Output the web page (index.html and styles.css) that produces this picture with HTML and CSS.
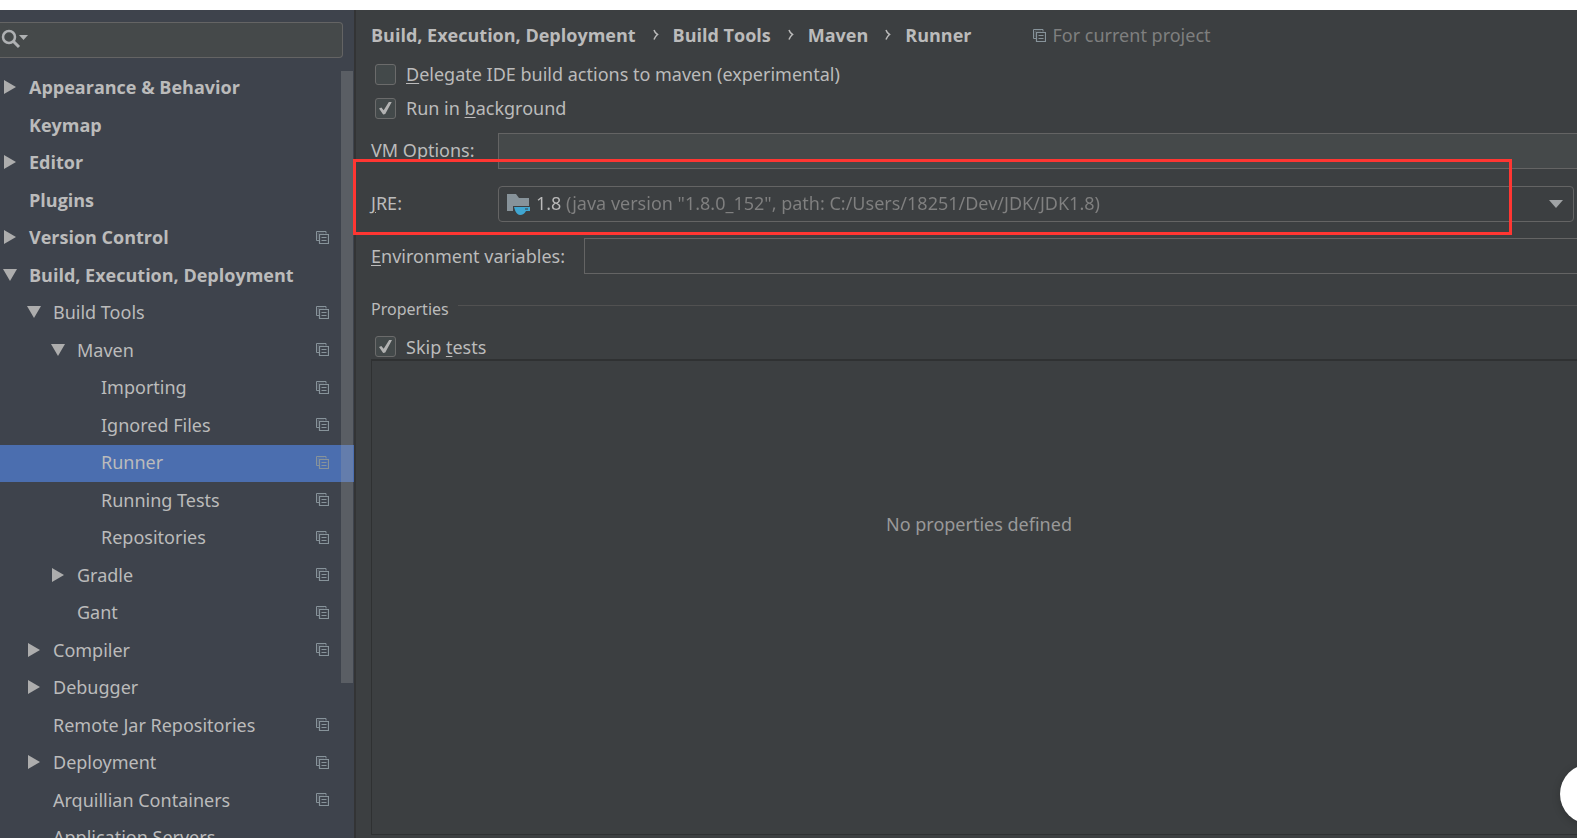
FILE: index.html
```html
<!DOCTYPE html>
<html lang="en">
<head>
<meta charset="utf-8">
<title>Settings</title>
<link rel="stylesheet" href="styles.css">
</head>
<body>
<svg class="sprite" aria-hidden="true">
  <symbol id="project" viewBox="0 0 13 13">
    <path d="M3 9.500H.5V.5h9.500v2" fill="none" stroke="currentColor"/>
    <path d="M2 8V2h6" fill="none" stroke="currentColor" stroke-opacity=".35"/>
    <path d="M3.500 3.500h9v9h-9z" fill="none" stroke="currentColor" stroke-width="1.200"/>
    <path d="M5.500 6.500h5M5.500 9.500h5" fill="none" stroke="currentColor" stroke-width="1.200"/>
  </symbol>
  <symbol id="closed" viewBox="0 0 14 14"><path d="M1 0l12 7-12 7z" fill="currentColor"/></symbol>
  <symbol id="open" viewBox="0 0 14 14"><path d="M0 1h14L7 13z" fill="currentColor"/></symbol>
  <symbol id="sep" viewBox="0 0 6 12"><path d="M1 1q1 3 3.500 4.500Q2 7.500 1 10.500" fill="none" stroke="currentColor" stroke-width="1.500"/></symbol>
</svg>
<div class="window">
  <aside class="sidebar">
    <div class="search">
      <svg class="search-icon" viewBox="0 0 28 20" aria-hidden="true"><circle cx="9" cy="8" r="6" fill="none" stroke="currentColor" stroke-width="2.500"/><path d="M13 12l6 6" stroke="currentColor" stroke-width="3"/><path d="M19 6h9l-4.500 5z" fill="currentColor"/></svg>
      <input class="search-input" type="text" aria-label="Search settings">
    </div>
    <nav class="tree" aria-label="Settings">
      <a class="row top" href="#"><svg class="arrow"><use href="#closed"/></svg><span class="name">Appearance &amp; Behavior</span></a>
      <a class="row top" href="#"><span class="arrow"></span><span class="name">Keymap</span></a>
      <a class="row top" href="#"><svg class="arrow"><use href="#closed"/></svg><span class="name">Editor</span></a>
      <a class="row top" href="#"><span class="arrow"></span><span class="name">Plugins</span></a>
      <a class="row top" href="#"><svg class="arrow"><use href="#closed"/></svg><span class="name">Version Control</span><svg class="project"><use href="#project"/></svg></a>
      <a class="row top" href="#"><svg class="arrow"><use href="#open"/></svg><span class="name">Build, Execution, Deployment</span></a>
      <a class="row level-1" href="#"><svg class="arrow"><use href="#open"/></svg><span class="name">Build Tools</span><svg class="project"><use href="#project"/></svg></a>
      <a class="row level-2" href="#"><svg class="arrow"><use href="#open"/></svg><span class="name">Maven</span><svg class="project"><use href="#project"/></svg></a>
      <a class="row level-3" href="#"><span class="arrow"></span><span class="name">Importing</span><svg class="project"><use href="#project"/></svg></a>
      <a class="row level-3" href="#"><span class="arrow"></span><span class="name">Ignored Files</span><svg class="project"><use href="#project"/></svg></a>
      <a class="row level-3 selected" href="#" aria-current="page"><span class="arrow"></span><span class="name">Runner</span><svg class="project"><use href="#project"/></svg></a>
      <a class="row level-3" href="#"><span class="arrow"></span><span class="name">Running Tests</span><svg class="project"><use href="#project"/></svg></a>
      <a class="row level-3" href="#"><span class="arrow"></span><span class="name">Repositories</span><svg class="project"><use href="#project"/></svg></a>
      <a class="row level-2" href="#"><svg class="arrow"><use href="#closed"/></svg><span class="name">Gradle</span><svg class="project"><use href="#project"/></svg></a>
      <a class="row level-2" href="#"><span class="arrow"></span><span class="name">Gant</span><svg class="project"><use href="#project"/></svg></a>
      <a class="row level-1" href="#"><svg class="arrow"><use href="#closed"/></svg><span class="name">Compiler</span><svg class="project"><use href="#project"/></svg></a>
      <a class="row level-1" href="#"><svg class="arrow"><use href="#closed"/></svg><span class="name">Debugger</span></a>
      <a class="row level-1" href="#"><span class="arrow"></span><span class="name">Remote Jar Repositories</span><svg class="project"><use href="#project"/></svg></a>
      <a class="row level-1" href="#"><svg class="arrow"><use href="#closed"/></svg><span class="name">Deployment</span><svg class="project"><use href="#project"/></svg></a>
      <a class="row level-1" href="#"><span class="arrow"></span><span class="name">Arquillian Containers</span><svg class="project"><use href="#project"/></svg></a>
      <a class="row level-1" href="#"><span class="arrow"></span><span class="name">Application Servers</span></a>
      <div class="scrollbar"></div>
    </nav>
  </aside>
  <main class="content">
    <header class="crumbs">
      <span>Build, Execution, Deployment</span><svg class="sep"><use href="#sep"/></svg><span>Build Tools</span><svg class="sep"><use href="#sep"/></svg><span>Maven</span><svg class="sep"><use href="#sep"/></svg><span>Runner</span>
      <span class="scope"><svg class="project"><use href="#project"/></svg>For current project</span>
    </header>
    <label class="check"><input type="checkbox"><span><u>D</u>elegate IDE build actions to maven (experimental)</span></label>
    <label class="check"><input type="checkbox" checked><span>Run in <u>b</u>ackground</span></label>
    <div class="fields">
      <div class="field">
        <label class="caption" for="vm"><u>V</u>M Options:</label>
        <input class="text filled" id="vm" type="text">
      </div>
      <div class="field jre">
        <label class="caption" for="jre"><u>J</u>RE:</label>
        <div class="combo">
          <svg class="folder" viewBox="0 0 24 22" aria-hidden="true"><path d="M0 1h9l3 4h10v8H6v5H0z" fill="#87939a"/><path d="M7 14h16v4h-4q-2 4-6 4t-6-8z" fill="#40a6d1"/><path d="M18 16h3" stroke="#3c3f41" stroke-width="1"/></svg>
          <select class="select" id="jre"><option>1.8 (java version "1.8.0_152", path: C:/Users/18251/Dev/JDK/JDK1.8)</option></select>
          <svg class="chevron" viewBox="0 0 14 8" aria-hidden="true"><path d="M0 0h14L7 8z" fill="currentColor"/></svg>
        </div>
      </div>
      <div class="field">
        <label class="caption wide" for="env"><u>E</u>nvironment variables:</label>
        <input class="text" id="env" type="text">
      </div>
    </div>
    <h2 class="section">Properties</h2>
    <label class="check skip"><input type="checkbox" checked><span>Skip <u>t</u>ests</span></label>
    <section class="properties">No properties defined</section>
    <div class="highlight"></div>
  </main>
</div>
<button class="bubble" aria-label="Assistant"></button>
</body>
</html>
```
FILE: styles.css
```css
* { box-sizing: border-box; }
body {
  margin: 0;
  height: 100vh;
  overflow: hidden;
  padding-top: 10px;
  background: #fff;
  color: #bbb;
  font: 18px/24px "Noto Sans", "Open Sans", sans-serif;
}
input, select, button { font: inherit; color: inherit; margin: 0; }
u { text-decoration-thickness: 1px; text-underline-offset: 2px; }
.sprite { position: absolute; width: 0; height: 0; }
.window { display: flex; height: 100%; background: #3c3f41; }

.sidebar {
  flex: 0 0 356px;
  display: flex;
  flex-direction: column;
  overflow: hidden;
  background: #3e434c;
  border-right: 2px solid #333435;
}
.search {
  display: flex;
  align-items: center;
  flex: none;
  height: 36px;
  margin: 12px 11px 12px 0;
  padding-bottom: 2px;
  border: 1px solid #646464;
  border-left: 0;
  border-radius: 0 4px 4px 0;
  background: #45494a;
}
.search-icon { flex: none; width: 28px; height: 20px; color: #afb1b3; }
.search-input { flex: 1; min-width: 0; border: 0; background: none; outline: 0; }
.tree { position: relative; }
.row {
  display: flex;
  align-items: center;
  height: 37px;
  padding: 0 25px 3px 3px;
  color: inherit;
  text-decoration: none;
}
.row:nth-child(even) { height: 38px; }
.top { font-family: "Open Sans", "Noto Sans", sans-serif; font-weight: 700; }
.level-1 { padding-left: 27px; }
.level-2 { padding-left: 51px; }
.level-3 { padding-left: 75px; }
.selected { background: #4b6eaf; }
.arrow { flex: none; width: 14px; height: 14px; margin-right: 12px; color: #adadad; }
.name { flex: 1; white-space: nowrap; }
.project { flex: none; width: 13px; height: 13px; color: #87939a; }
.scrollbar {
  position: absolute;
  top: 1px;
  right: 1px;
  width: 12px;
  height: 612px;
  background: rgba(166, 166, 166, .28);
}

.content {
  position: relative;
  flex: 1;
  min-width: 0;
  display: flex;
  flex-direction: column;
  padding: 0 0 3px 15px;
}
.crumbs {
  display: flex;
  align-items: center;
  height: 47px;
  padding-top: 3px;
  font-family: "Open Sans", "Noto Sans", sans-serif;
  font-weight: 700;
  white-space: nowrap;
}
.sep { width: 6px; height: 12px; margin: 0 14px 0 17px; }
.scope {
  display: flex;
  align-items: center;
  gap: 6px;
  margin-left: 62px;
  font-family: "Noto Sans", "Open Sans", sans-serif;
  font-weight: 400;
  color: #7f7f7f;
}
.check { display: flex; align-items: center; gap: 10px; height: 34px; padding-left: 4px; }
.check input {
  appearance: none;
  display: grid;
  place-items: center;
  width: 21px;
  height: 21px;
  border: 1px solid #6b6b6b;
  border-radius: 3px;
  background: #43494a;
}
.check input:checked::before {
  content: "";
  width: 13px;
  height: 13px;
  background: #b2b2b2;
  clip-path: polygon(0 54%, 18% 46%, 36% 68%, 78% 0, 100% 0, 48% 96%, 32% 100%);
}
.fields { display: grid; gap: 16px; margin-top: 8px; }
.field { display: flex; align-items: center; height: 36px; }
.jre { height: 37px; padding-right: 3px; }
.caption { flex: 0 0 127px; padding-bottom: 2px; white-space: nowrap; }
.wide { flex-basis: 213px; padding-bottom: 0; }
.text {
  flex: 1;
  min-width: 0;
  height: 36px;
  padding: 0 8px;
  border: 1px solid #646464;
  border-right: 0;
  background: none;
  outline: 0;
}
.filled { background: #45494a; }
.combo {
  flex: 1;
  display: flex;
  align-items: center;
  height: 36px;
  padding: 0 10px 0 8px;
  border: 1px solid #646464;
  border-radius: 4px;
}
.folder { flex: none; width: 24px; height: 22px; }
.select {
  appearance: none;
  flex: 1;
  min-width: 0;
  height: 34px;
  padding: 0 0 2px 5px;
  border: 0;
  outline: 0;
  color: transparent;
  background: linear-gradient(to right, #bbb 32px, #808080 32px) text;
}
.chevron { flex: none; width: 14px; height: 8px; color: #a0a3a5; }
.section {
  display: flex;
  gap: 9px;
  margin: 23px 0 9px;
  font-size: 16px;
  font-weight: 400;
}
.section::after { content: ""; flex: 1; height: 1px; margin-top: 8px; background: #515151; }
.skip { height: 33px; margin-bottom: -4px; }
.properties {
  flex: 1;
  margin-right: -10px;
  padding-top: 151px;
  border: 1px solid #2f3132;
  border-top-width: 2px;
  text-align: center;
  color: #999;
}
.highlight {
  position: absolute;
  top: 149px;
  left: -3px;
  right: 65px;
  height: 76px;
  border: 3px solid #ff3632;
  pointer-events: none;
}
.bubble {
  position: fixed;
  right: -43px;
  bottom: 14px;
  width: 60px;
  height: 60px;
  border: 0;
  border-radius: 50%;
  background: #fff;
  box-shadow: 0 2px 8px rgba(0, 0, 0, .2);
}
```
